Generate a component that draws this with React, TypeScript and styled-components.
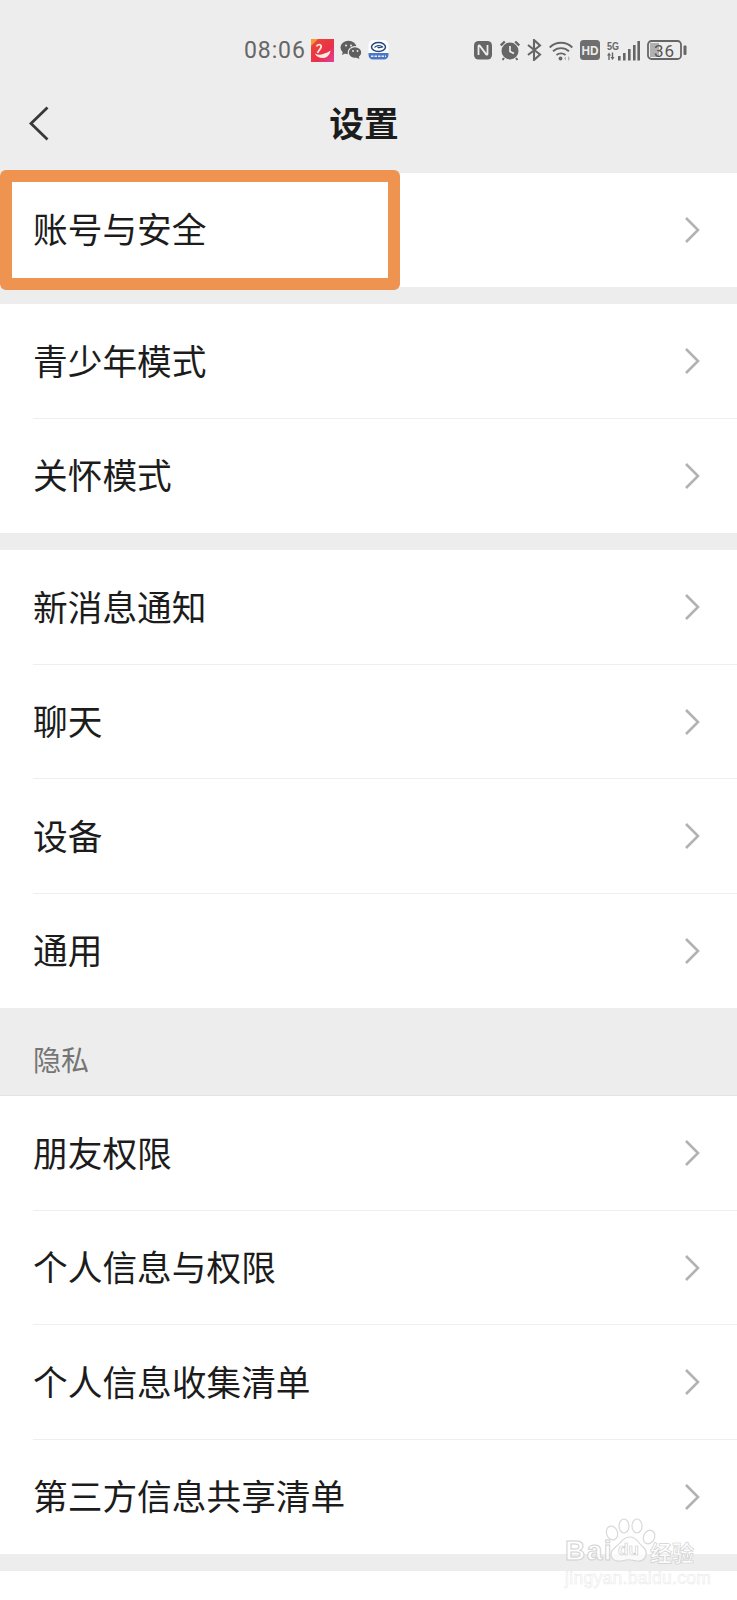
import React from "react";
import styled, { createGlobalStyle } from "styled-components";

const GlobalStyle = createGlobalStyle`
  html, body {
    margin: 0;
    padding: 0;
    background: #ffffff;
  }
  body {
    font-family: "Noto Sans CJK SC", "Noto Sans", sans-serif;
  }
`;

const Page = styled.div`
  position: relative;
  width: 737px;
  height: 1600px;
  overflow: hidden;
  background: #ededed;
`;

const StatusBar = styled.div`
  display: flex;
  align-items: center;
  height: 56px;
  padding: 22px 0 0 244px;
  box-sizing: content-box;
`;

const Time = styled.span`
  font-family: Roboto, "Liberation Sans", sans-serif;
  font-size: 23px;
  letter-spacing: 0.9px;
  color: #666666;
  margin-right: 5px;
`;

const AppIcons = styled.div`
  display: flex;
  align-items: center;
  gap: 6px;
`;

const SystemIcons = styled.div`
  display: flex;
  align-items: center;
  gap: 7px;
  margin-left: 84px;
`;

const Nav = styled.div`
  position: relative;
  display: flex;
  align-items: center;
  justify-content: center;
  height: 94.5px;
  padding-right: 9px;
  box-sizing: border-box;
`;

const BackButton = styled.svg`
  position: absolute;
  left: 28px;
  top: 28px;
`;

const Title = styled.h1`
  margin: 0;
  font-size: 34.7px;
  line-height: 44px;
  font-weight: 700;
  color: #1c1c1c;
  margin-top: -6px;
`;

const Group = styled.div<{ $gap?: number }>`
  background: #ffffff;
  margin-bottom: ${(p) => p.$gap ?? 17}px;
`;

const Row = styled.div`
  display: flex;
  align-items: center;
  justify-content: space-between;
  height: 114.5px;
  margin-left: 33px;
  padding-right: 37px;
  box-shadow: inset 0 -1px 0 #efefef;
  &:last-child {
    box-shadow: none;
  }
`;

const RowLabel = styled.span`
  font-size: 34.7px;
  line-height: 44px;
  color: #1c1c1c;
  margin-bottom: 3px;
`;

const SectionHeader = styled.div`
  display: flex;
  align-items: center;
  height: 88px;
  padding: 15px 0 0 33px;
  box-sizing: border-box;
  margin-top: -17px;
  font-size: 28px;
  color: #757575;
  border-bottom: 1px solid #e4e4e4;
`;

const Highlight = styled.div`
  position: absolute;
  left: 0;
  top: 170px;
  width: 400px;
  height: 120px;
  box-sizing: border-box;
  border: 12px solid #ef9350;
  border-radius: 6px;
`;

const Watermark = styled.div`
  position: absolute;
  left: 562px;
  top: 1516px;
  width: 140px;
  height: 72px;
  color: rgba(255, 255, 255, 0.85);
`;

const WatermarkPaw = styled.svg`
  position: absolute;
  left: 6px;
  top: 0;
`;

const WatermarkBrand = styled.span`
  position: absolute;
  top: 17px;
  font-family: "Liberation Sans", sans-serif;
  font-weight: 700;
  font-size: 28px;
  line-height: 36px;
  letter-spacing: 1.5px;
  -webkit-text-stroke: 1px #d2d2d2;
`;

const BrandBai = styled(WatermarkBrand)`
  left: 3px;
`;

const BrandDu = styled(WatermarkBrand)`
  left: 56px;
  top: 24px;
  font-size: 17px;
  line-height: 20px;
  letter-spacing: 0;
  -webkit-text-stroke: 0.7px #d0d0d0;
`;

const BrandCn = styled(WatermarkBrand)`
  left: 88px;
  top: 20px;
  font-family: "Noto Sans CJK SC", sans-serif;
  font-size: 22px;
  line-height: 30px;
  letter-spacing: 0;
  -webkit-text-stroke: 0.7px #d0d0d0;
`;

const WatermarkUrl = styled.span`
  position: absolute;
  left: 3px;
  top: 52px;
  font-family: "Liberation Sans", sans-serif;
  font-size: 17.5px;
  line-height: 20px;
  letter-spacing: 0.3px;
  white-space: nowrap;
  color: rgba(255, 255, 255, 0.9);
  -webkit-text-stroke: 0.5px #e8e8e8;
`;

const Chevron = () => (
  <svg width="16" height="28" viewBox="0 0 16 28" fill="none">
    <path d="M2 2 L14 14 L2 26" stroke="#b2b2b2" strokeWidth="2.6" />
  </svg>
);

const SwanIcon = () => (
  <svg width="23" height="23" viewBox="0 0 23 23" fill="none">
    <defs>
      <linearGradient id="swanBg" x1="0" y1="0" x2="1" y2="1">
        <stop offset="0" stopColor="#ee4b2f" />
        <stop offset="0.6" stopColor="#e8304a" />
        <stop offset="1" stopColor="#e040a0" />
      </linearGradient>
    </defs>
    <rect width="23" height="23" fill="url(#swanBg)" />
    <path d="M0 0h7L0 7z" fill="#f59a3a" />
    <path d="M5.500 7.500c.8-2.500 4.500-2.500 4.700 0 .2 2.500-3.500 4-3.500 6.500" stroke="#fde8e0" strokeWidth="1.800" />
    <path
      d="M4 14.500c3 1.500 5.500 1.500 8 .5 2.500-1 5-1.500 7.500-3.500-.5 4-3 7-7 7.500-4 .3-7.500-1.500-8.500-4.500z"
      fill="#fde8e0"
    />
  </svg>
);

const WeChatIcon = () => (
  <svg width="22" height="20" viewBox="0 0 22 20" fill="#5f5f5f">
    <ellipse cx="8.500" cy="7.500" rx="8" ry="6.800" />
    <path d="M3 11l-1 4 4-2z" />
    <ellipse cx="15" cy="12.500" rx="6.800" ry="5.800" stroke="#ededed" strokeWidth="1.200" />
    <path d="M18.500 16l1 3-3.500-1.500z" />
    <circle cx="6" cy="5.500" r="1" fill="#ededed" />
    <circle cx="11" cy="5.500" r="1" fill="#ededed" />
    <circle cx="13" cy="11" r="0.900" fill="#ededed" />
    <circle cx="17.500" cy="11" r="0.900" fill="#ededed" />
  </svg>
);

const SpiralAppIcon = () => (
  <svg width="21" height="20" viewBox="0 0 21 20" fill="none">
    <rect x="0.500" width="20" height="19.500" rx="5" fill="#ffffff" />
    <path d="M0.500 13h20v2a4.500 4.500 0 0 1-4.500 4.500H5A4.500 4.500 0 0 1 .5 15z" fill="#4a76c4" />
    <ellipse cx="10.500" cy="7" rx="7" ry="4.400" stroke="#25477f" strokeWidth="1.500" />
    <path d="M6.500 7.500c1.500-2.500 6.500-2.500 8 -.5-2 .8-4 .8-5 .3" stroke="#25477f" strokeWidth="1.300" />
    <path d="M3 16.300h15" stroke="#dfe8f7" strokeWidth="1.500" strokeDasharray="2.500 1" />
  </svg>
);

const NfcIcon = () => (
  <svg width="20" height="20" viewBox="0 0 20 20" fill="none">
    <rect x="1" y="1" width="18" height="18.500" rx="4.500" fill="#666666" />
    <path d="M5.500 15V6.300c0-1 .8-1.200 1.400-.4l6.200 8.200c.6.800 1.400.6 1.400-.4V5" stroke="#ededed" strokeWidth="1.800" />
  </svg>
);

const AlarmIcon = () => (
  <svg width="20" height="21" viewBox="0 0 20 21" fill="none">
    <circle cx="10" cy="11" r="8.500" fill="#666666" />
    <path d="M10 6v5.500l4 2" stroke="#ededed" strokeWidth="1.700" />
    <path d="M.8 5.500 4.800 1.500M19.200 5.500l-4-4" stroke="#666666" strokeWidth="2.400" />
    <path d="M4 18 2.500 20M16 18l1.500 2" stroke="#666666" strokeWidth="2" />
  </svg>
);

const BluetoothIcon = () => (
  <svg width="15" height="22" viewBox="0 0 15 22" fill="none">
    <path d="M1 6l12 9.500-6 5.500V1l6 5.500L1 16" stroke="#666666" strokeWidth="2.100" />
  </svg>
);

const WifiIcon = () => (
  <svg width="24" height="21" viewBox="0 0 24 21" fill="none">
    <path d="M.7 7.500c6.300-6.300 16.300-6.300 22.600 0" stroke="#666666" strokeWidth="1.900" />
    <path d="M4 11.300c4.500-4.300 11.500-4.300 16 0" stroke="#666666" strokeWidth="1.900" />
    <path d="M7.500 15c2.500-2.200 6.500-2.200 9 0" stroke="#666666" strokeWidth="1.900" />
    <circle cx="11.500" cy="18.500" r="1.900" fill="#666666" />
    <path d="M17 16.500l-2 2 2 2zM19 16v5l2-2.500z" fill="#b5b5b5" />
  </svg>
);

const HdIcon = () => (
  <svg width="20" height="20" viewBox="0 0 20 20">
    <rect width="20" height="20" rx="3.500" fill="#6e6e6e" />
    <text
      x="10"
      y="15"
      textAnchor="middle"
      fontFamily="'Liberation Sans', sans-serif"
      fontWeight="700"
      fontSize="13.500"
      textLength="17"
      lengthAdjust="spacingAndGlyphs"
      fill="#ededed"
    >
      HD
    </text>
  </svg>
);

const SignalIcon = () => (
  <svg width="33" height="21" viewBox="0 0 33 21" fill="#666666">
    <text
      x="0"
      y="10"
      fontFamily="'Liberation Sans', sans-serif"
      fontWeight="700"
      fontSize="11.500"
      textLength="12"
      lengthAdjust="spacingAndGlyphs"
    >
      5G
    </text>
    <path d="M2 12.500l-2 3h1.300v4.500h1.400v-4.500H4zM5.500 20l2-3H6.200v-4.500H4.800V17H3.500z" />
    <rect x="11" y="16" width="2.600" height="4.500" />
    <rect x="16" y="13" width="2.600" height="7.500" />
    <rect x="21" y="9" width="2.600" height="11.500" />
    <rect x="26" y="5" width="2.600" height="15.500" />
    <rect x="30.400" y="1" width="2.600" height="19.500" />
  </svg>
);

const BatteryIcon = () => (
  <svg width="40" height="20" viewBox="0 0 40 20" fill="none">
    <rect x="1" y="1" width="33" height="18" rx="3.500" stroke="#666666" strokeWidth="1.800" />
    <rect x="3" y="3" width="9" height="14" fill="#b0b0b0" />
    <text x="7" y="16.500" fontFamily="Roboto, sans-serif" fontSize="17" fill="#555555" letterSpacing="1">
      36
    </text>
    <rect x="36.500" y="5.500" width="3" height="9.500" rx="1" fill="#666666" />
  </svg>
);

const BaiduPaw = () => (
  <WatermarkPaw width="120" height="50" viewBox="0 0 120 50" fill="rgba(255,255,255,0.7)" stroke="#d8d8d8" strokeWidth="1.200">
    <ellipse cx="44" cy="17" rx="5.500" ry="7" transform="rotate(-20 44 17)" />
    <ellipse cx="56" cy="10" rx="5" ry="7" />
    <ellipse cx="69" cy="10" rx="5" ry="7" />
    <ellipse cx="81" cy="21" rx="5.500" ry="7" transform="rotate(25 81 21)" />
    <path d="M62 21c7 0 8 6 13 10 6 5 3 15-6 14-4-.4-7-2-11-1-6 2-14 2-15-5-1-6 6-8 9-12 3-3 4-6 10-6z" />
  </WatermarkPaw>
);

const topGroups: string[][] = [
  ["账号与安全"],
  ["青少年模式", "关怀模式"],
  ["新消息通知", "聊天", "设备", "通用"],
];

const privacyItems: string[] = ["朋友权限", "个人信息与权限", "个人信息收集清单", "第三方信息共享清单"];

const SettingRow = ({ label }: { label: string }) => (
  <Row>
    <RowLabel>{label}</RowLabel>
    <Chevron />
  </Row>
);

export default function App() {
  return (
    <Page>
      <GlobalStyle />
      <StatusBar>
        <Time>08:06</Time>
        <AppIcons>
          <SwanIcon />
          <WeChatIcon />
          <SpiralAppIcon />
        </AppIcons>
        <SystemIcons>
          <NfcIcon />
          <AlarmIcon />
          <BluetoothIcon />
          <WifiIcon />
          <HdIcon />
          <SignalIcon />
          <BatteryIcon />
        </SystemIcons>
      </StatusBar>
      <Nav>
        <BackButton width="24" height="36" viewBox="0 0 24 36" fill="none">
          <path d="M19.500 1.500 L3 17.500 L19.500 33.500" stroke="#383838" strokeWidth="2.800" />
        </BackButton>
        <Title>设置</Title>
      </Nav>

      {topGroups.map((items) => (
        <Group key={items[0]}>
          {items.map((label) => (
            <SettingRow key={label} label={label} />
          ))}
        </Group>
      ))}

      <SectionHeader>隐私</SectionHeader>
      <Group>
        {privacyItems.map((label) => (
          <SettingRow key={label} label={label} />
        ))}
      </Group>
      <Group $gap={0}>
        <Row />
      </Group>

      <Highlight />
      <Watermark>
        <BaiduPaw />
        <BrandBai>Bai</BrandBai>
        <BrandDu>du</BrandDu>
        <BrandCn>经验</BrandCn>
        <WatermarkUrl>jingyan.baidu.com</WatermarkUrl>
      </Watermark>
    </Page>
  );
}
